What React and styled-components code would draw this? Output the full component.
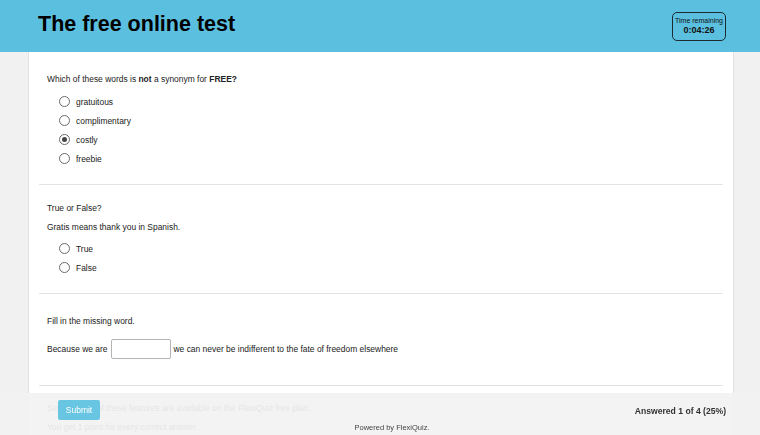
import React from "react";
import styled, { createGlobalStyle } from "styled-components";

const GlobalStyle = createGlobalStyle`
  html, body { margin: 0; padding: 0; }
  body {
    background: #f1f1f1;
    font-family: "Liberation Sans", Arial, sans-serif;
    color: #222;
  }
  * { box-sizing: border-box; }
`;

const Header = styled.header`
  height: 52px;
  background: #5bbfdf;
  display: flex;
  align-items: center;
  justify-content: space-between;
  padding: 0 34px 0 38px;
`;

const Title = styled.h1`
  margin: 0;
  font-size: 21.5px;
  font-weight: bold;
  color: #000;
  position: relative;
  top: -2px;
`;

const Timer = styled.div`
  width: 54px;
  height: 29px;
  border: 1px solid #1d2a30;
  border-radius: 5px;
  display: flex;
  flex-direction: column;
  align-items: center;
  justify-content: center;
  color: #111;
  line-height: 1.15;
`;

const TimerLabel = styled.span`
  font-size: 7px;
`;

const TimerValue = styled.span`
  font-size: 9px;
  font-weight: bold;
`;

const Panel = styled.main`
  margin-left: 28px;
  width: 706px;
  background: #fff;
  border-left: 1px solid #e2e2e2;
  border-right: 1px solid #e2e2e2;
  padding-top: 6px;
  padding-bottom: 60px;
`;

const Question = styled.section`
  margin: 0 10px;
  padding: ${(p) => p.$pad || "12px 8px 16px"};
  border-bottom: 1px solid #e3e3e3;
  font-size: 8.45px;
  color: #222;
`;

const Line = styled.p`
  margin: 0;
  line-height: 19px;
`;

const Options = styled.div`
  margin-top: ${(p) => p.$mt ?? 3}px;
  display: flex;
  flex-direction: column;
`;

const Option = styled.label`
  display: flex;
  align-items: center;
  height: 19px;
  padding-left: 12px;
  gap: 6px;
`;

const Radio = styled.span`
  width: 11px;
  height: 11px;
  border-radius: 50%;
  border: 1px solid #6a6a6a;
  background: #fff;
  display: flex;
  align-items: center;
  justify-content: center;
  &::after {
    content: "";
    width: 5px;
    height: 5px;
    border-radius: 50%;
    background: ${(p) => (p.$checked ? "#444" : "transparent")};
  }
`;

const Sentence = styled.div`
  display: flex;
  align-items: center;
  gap: 3px;
  margin-top: 8px;
  margin-bottom: 10px;
  height: 20px;
`;

const Blank = styled.input`
  width: 60px;
  height: 20px;
  border: 1px solid #b4b4b4;
  border-radius: 2px;
  padding: 0 4px;
  font-family: inherit;
  font-size: 9px;
  outline: none;
`;

const Footer = styled.footer`
  position: fixed;
  left: 0;
  right: 0;
  bottom: 0;
  height: 42px;
  background: rgba(242, 242, 242, 0.93);
  padding: 7px 34px 0 58px;
  display: flex;
  flex-direction: column;
`;

const FooterRow = styled.div`
  display: flex;
  align-items: center;
  justify-content: space-between;
`;

const SubmitButton = styled.button`
  width: 42px;
  height: 20px;
  border: none;
  border-radius: 2px;
  background: #69c6e3;
  color: #fff;
  font-family: inherit;
  font-size: 8.5px;
  padding: 0;
`;

const Answered = styled.span`
  font-size: 8.6px;
  font-weight: bold;
  color: #333;
  position: relative;
  top: 1px;
`;

const Powered = styled.div`
  text-align: center;
  font-size: 7.5px;
  color: #444;
  margin-top: 3px;
`;

const q1 = [
  { label: "gratuitous" },
  { label: "complimentary" },
  { label: "costly", checked: true },
  { label: "freebie" },
];

export default function App() {
  return (
    <>
      <GlobalStyle />
      <Header>
        <Title>The free online test</Title>
        <Timer>
          <TimerLabel>Time remaining</TimerLabel>
          <TimerValue>0:04:26</TimerValue>
        </Timer>
      </Header>
      <Panel>
        <Question>
          <Line>
            Which of these words is <b>not</b> a synonym for <b>FREE?</b>
          </Line>
          <Options>
            {q1.map((o) => (
              <Option key={o.label}>
                <Radio $checked={o.checked} />
                {o.label}
              </Option>
            ))}
          </Options>
        </Question>
        <Question $pad="14px 8px 16px">
          <Line>True or False?</Line>
          <Line>Gratis means thank you in Spanish.</Line>
          <Options $mt={2}>
            <Option>
              <Radio />
              True
            </Option>
            <Option>
              <Radio />
              False
            </Option>
          </Options>
        </Question>
        <Question $pad="18px 8px 16px">
          <Line>Fill in the missing word.</Line>
          <Sentence>
            <span>Because we are</span>
            <Blank />
            <span>we can never be indifferent to the fate of freedom elsewhere</span>
          </Sentence>
        </Question>
        <Question $pad="13px 8px 16px">
          <Line>Select which of these features are available on the FlexiQuiz free plan.</Line>
          <Line>You get 1 point for every correct answer.</Line>
        </Question>
      </Panel>
      <Footer>
        <FooterRow>
          <SubmitButton>Submit</SubmitButton>
          <Answered>Answered 1 of 4 (25%)</Answered>
        </FooterRow>
        <Powered>Powered by FlexiQuiz.</Powered>
      </Footer>
    </>
  );
}
